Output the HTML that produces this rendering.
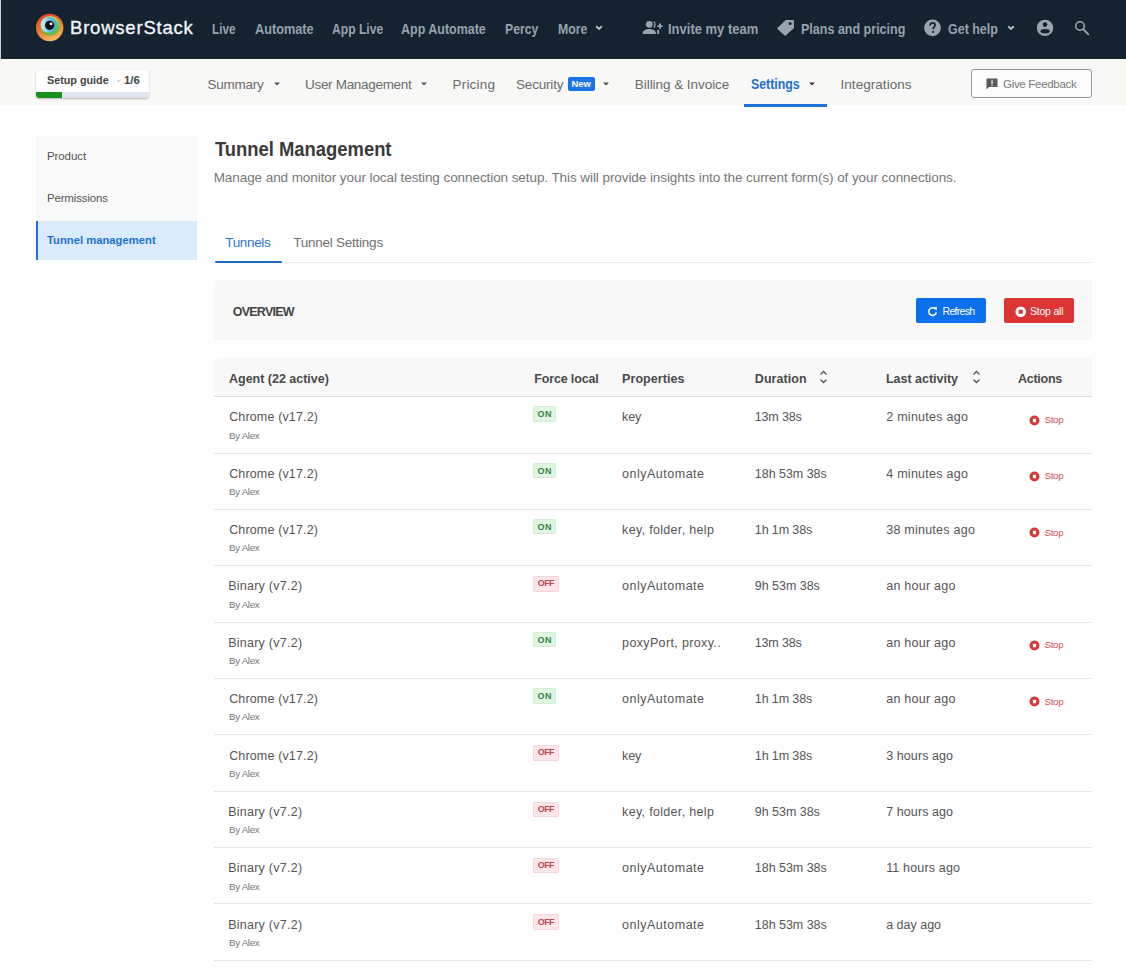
<!DOCTYPE html>
<html><head><meta charset="utf-8"><title>Tunnel Management</title>
<style>
html,body{margin:0;padding:0;}
body{width:1126px;height:978px;position:relative;overflow:hidden;background:#fff;font-family:"Liberation Sans",sans-serif;}
.t{position:absolute;white-space:nowrap;}
.abs{position:absolute;}
#topbar{position:absolute;left:1px;top:0;width:1125px;height:59px;background:#152331;}
#leftedge{position:absolute;left:0;top:0;width:1px;height:59px;background:#c9d1dc;}
#subnav{position:absolute;left:0;top:59px;width:1126px;height:45.5px;background:#f8f8f7;}
#setup{position:absolute;left:36px;top:70px;width:112.5px;height:27.5px;background:#fff;border-radius:3px;box-shadow:0 1px 2px rgba(0,0,0,0.25);overflow:hidden;}
#setup .bar{position:absolute;left:0;bottom:0;width:100%;height:5.8px;background:#dfe4ef;}
#setup .prog{position:absolute;left:0;bottom:0;width:26px;height:5.8px;background:#17901f;}
#newbadge{position:absolute;left:567.6px;top:76.6px;width:27.4px;height:14px;background:#1773e6;border-radius:2px;}
#setting-ul{position:absolute;left:743.8px;top:104px;width:83.4px;height:2.5px;background:#1f73d8;}
#feedback{position:absolute;left:971px;top:69.3px;width:119px;height:26.6px;border:1px solid #969696;border-radius:3px;background:#fcfcfc;}
#sidebar{position:absolute;left:35.5px;top:135.6px;width:161px;height:124.4px;background:#f9f9f9;}
#side-active{position:absolute;left:35.5px;top:220.8px;width:161px;height:39.2px;background:#daecfb;}
#side-bar{position:absolute;left:35.5px;top:220.8px;width:2px;height:39.2px;background:#1f73d8;}
#tabline{position:absolute;left:214.7px;top:262px;width:877.3px;height:1px;background:#ebebeb;}
#tab-ul{position:absolute;left:214.7px;top:261.2px;width:67.4px;height:2.2px;background:#1e68c2;border-radius:1px;}
#overview{position:absolute;left:214.3px;top:280.2px;width:877.4px;height:60.1px;background:#f8f8f8;border-radius:3px;}
#btn-refresh{position:absolute;left:915.9px;top:298.3px;width:70.3px;height:24.5px;background:#0c6fec;border-radius:2px;}
#btn-stop{position:absolute;left:1004.1px;top:298.3px;width:70px;height:24.5px;background:#db3434;border-radius:2px;}
#thead{position:absolute;left:214.3px;top:358.3px;width:877.7px;height:38.1px;background:#f8f8f8;border-radius:4px 4px 0 0;}
#thead-line{position:absolute;left:214.3px;top:396.3px;width:877.7px;height:1px;background:#dcdcdc;}
.rowline{position:absolute;left:214.3px;width:877.7px;height:1px;background:#e6e6e6;}
.badge{position:absolute;left:533.3px;height:15.4px;border-radius:2px;}
.badge.on{width:22.6px;background:#e0f6e0;box-shadow:inset 0 0 0 1px #d2efd4;}
.badge.off{width:26.2px;background:#fde6ea;box-shadow:inset 0 0 0 1px #f9d6dc;}
.stopic{position:absolute;left:1029px;}
</style></head><body>
<div id="topbar"></div><div id="leftedge"></div>
<svg class="abs" style="left:0;top:0" width="70" height="59" viewBox="0 0 70 59">
  <defs>
    <linearGradient id="lgO" x1="0.3" y1="0" x2="0.7" y2="1">
      <stop offset="0" stop-color="#e4402e"/><stop offset="0.45" stop-color="#ec7430"/><stop offset="1" stop-color="#f4c15e"/>
    </linearGradient>
    <linearGradient id="lgG" x1="0.5" y1="0" x2="0.5" y2="1">
      <stop offset="0" stop-color="#c9d84a"/><stop offset="0.5" stop-color="#77c043"/><stop offset="1" stop-color="#5fb844"/>
    </linearGradient>
    <linearGradient id="lgB" x1="0" y1="0.5" x2="1" y2="0.5">
      <stop offset="0" stop-color="#d9eef4"/><stop offset="0.5" stop-color="#6cc5e0"/><stop offset="1" stop-color="#3aa9d2"/>
    </linearGradient>
  </defs>
  <circle cx="49.7" cy="27.5" r="13.7" fill="url(#lgO)"/>
  <circle cx="50.2" cy="25.8" r="9.9" fill="url(#lgG)"/>
  <circle cx="48.9" cy="24.8" r="8.0" fill="url(#lgB)"/>
  <circle cx="49.6" cy="25.3" r="4.6" fill="#0e1218"/>
  <circle cx="51" cy="23.8" r="1.4" fill="#fff"/>
</svg>
<!-- top nav icons -->
<svg class="abs" style="left:594px;top:24px" width="10" height="8" viewBox="0 0 10 8"><path d="M2.2 2.2 L5 4.9 L7.8 2.2" fill="none" stroke="#b4bcc6" stroke-width="1.9"/></svg>
<svg class="abs" style="left:641px;top:19px" width="23" height="18" viewBox="0 0 23 18">
  <circle cx="8.3" cy="5.3" r="3.4" fill="#9aa4af"/>
  <path d="M1.6 15 C1.6 11.3 4.6 9.9 8.3 9.9 C12 9.9 15 11.3 15 15 Z" fill="#9aa4af"/>
  <path d="M12.7 2.4 C14.5 3.8 14.5 7.2 12.7 8.5" fill="none" stroke="#9aa4af" stroke-width="1.3"/>
  <path d="M16.4 7.1 h5.2 M19 4.5 v5.2" stroke="#9aa4af" stroke-width="1.9"/>
  <rect x="16.2" y="11" width="2" height="4" fill="#9aa4af"/>
</svg>
<svg class="abs" style="left:776px;top:19px" width="19" height="19" viewBox="0 0 19 19">
  <path d="M9.8 1 L17.8 1.1 L18 9.0 L9.2 17.0 L0.9 9.6 Z" fill="#9aa4af"/>
  <circle cx="14.1" cy="4.4" r="1.5" fill="#152331"/>
</svg>
<svg class="abs" style="left:923px;top:19px" width="19" height="19" viewBox="0 0 19 19">
  <circle cx="9.5" cy="8.9" r="8.3" fill="#9aa4af"/>
  <path d="M7.1 6.4 C7.1 4.6 8.3 3.9 9.6 3.9 C11 3.9 12.1 4.8 12.1 6.1 C12.1 7.8 10.1 8.1 10.1 10.3" fill="none" stroke="#152331" stroke-width="1.7"/>
  <circle cx="10.1" cy="13.0" r="1.1" fill="#152331"/>
</svg>
<svg class="abs" style="left:1006px;top:24px" width="10" height="8" viewBox="0 0 10 8"><path d="M2.2 2.2 L5 4.9 L7.8 2.2" fill="none" stroke="#b4bcc6" stroke-width="1.9"/></svg>
<svg class="abs" style="left:1036px;top:19px" width="18" height="19" viewBox="0 0 18 19">
  <circle cx="9" cy="8.9" r="8.2" fill="#9aa4af"/>
  <circle cx="9" cy="5.6" r="2.3" fill="#152331"/>
  <ellipse cx="9.1" cy="12.3" rx="4.6" ry="2.2" fill="#152331"/>
</svg>
<svg class="abs" style="left:1072px;top:19px" width="18" height="18" viewBox="0 0 18 18">
  <circle cx="8" cy="7" r="4.3" fill="none" stroke="#9aa4af" stroke-width="1.6"/>
  <path d="M11.2 10.2 L16.3 15.3" stroke="#9aa4af" stroke-width="1.9" stroke-linecap="round"/>
</svg>
<div id="subnav"></div>
<div id="setup"><div class="bar"></div><div class="prog"></div></div>
<svg class="abs" style="left:116px;top:79px" width="5" height="5" viewBox="0 0 5 5"><path d="M0.5 1 L4.5 1 L2.5 3.5 Z" fill="#d0d0d0"/></svg>
<div id="newbadge"></div>
<div id="setting-ul"></div>
<div id="feedback"></div>
<!-- carets -->
<svg class="abs" style="left:272px;top:81px" width="10" height="6" viewBox="0 0 10 6"><path d="M2 1.5 L8 1.5 L5 4.5 Z" fill="#555"/></svg>
<svg class="abs" style="left:419px;top:81px" width="10" height="6" viewBox="0 0 10 6"><path d="M2 1.5 L8 1.5 L5 4.5 Z" fill="#555"/></svg>
<svg class="abs" style="left:601px;top:81px" width="10" height="6" viewBox="0 0 10 6"><path d="M2 1.5 L8 1.5 L5 4.5 Z" fill="#555"/></svg>
<svg class="abs" style="left:807px;top:81px" width="10" height="6" viewBox="0 0 10 6"><path d="M2 1.5 L8 1.5 L5 4.5 Z" fill="#3a3a3a"/></svg>
<svg class="abs" style="left:985px;top:77px" width="14" height="14" viewBox="0 0 14 14">
  <path d="M1.5 1.5 H12.5 V10 H4 L1.5 12.5 Z" fill="#595959"/>
  <rect x="6.4" y="3.3" width="1.3" height="3.6" fill="#fafafa"/><rect x="6.4" y="7.7" width="1.3" height="1.2" fill="#fafafa"/>
</svg>
<div id="sidebar"></div><div id="side-active"></div><div id="side-bar"></div>
<div id="tabline"></div><div id="tab-ul"></div>
<div id="overview"></div>
<div id="btn-refresh"></div><div id="btn-stop"></div>
<svg class="abs" style="left:927px;top:306px" width="11" height="11" viewBox="0 0 11 11">
  <path d="M8.7 3.4 A3.8 3.8 0 1 0 9.3 6.3" fill="none" stroke="#fff" stroke-width="1.5"/>
  <path d="M6.6 1.2 L9.9 1.0 L9.7 4.4 Z" fill="#fff"/>
</svg>
<svg class="abs" style="left:1014.5px;top:305.6px" width="11.5" height="11.5" viewBox="0 0 11.5 11.5"><circle cx="5.75" cy="5.75" r="5.3" fill="#fff"/><rect x="3.75" y="3.75" width="4" height="4" fill="#db3434"/></svg>
<div id="thead"></div><div id="thead-line"></div>
<svg class="abs" style="left:818px;top:369px" width="11" height="16" viewBox="0 0 11 16"><path d="M2.5 5.5 L5.5 2.5 L8.5 5.5 M2.5 10.5 L5.5 13.5 L8.5 10.5" fill="none" stroke="#555" stroke-width="1.3"/></svg>
<svg class="abs" style="left:970.5px;top:369px" width="11" height="16" viewBox="0 0 11 16"><path d="M2.5 5.5 L5.5 2.5 L8.5 5.5 M2.5 10.5 L5.5 13.5 L8.5 10.5" fill="none" stroke="#555" stroke-width="1.3"/></svg>
<div class="rowline" style="top:452.65px"></div>
<div class="rowline" style="top:509.00px"></div>
<div class="rowline" style="top:565.35px"></div>
<div class="rowline" style="top:621.70px"></div>
<div class="rowline" style="top:678.05px"></div>
<div class="rowline" style="top:734.40px"></div>
<div class="rowline" style="top:790.75px"></div>
<div class="rowline" style="top:847.10px"></div>
<div class="rowline" style="top:903.45px"></div>
<div class="rowline" style="top:959.80px"></div>
<div class="badge on" style="top:406.40px"></div>
<div class="badge on" style="top:462.75px"></div>
<div class="badge on" style="top:519.10px"></div>
<div class="badge off" style="top:576.15px"></div>
<div class="badge on" style="top:631.80px"></div>
<div class="badge on" style="top:688.15px"></div>
<div class="badge off" style="top:745.20px"></div>
<div class="badge off" style="top:801.55px"></div>
<div class="badge off" style="top:857.90px"></div>
<div class="badge off" style="top:914.25px"></div>
<svg class="stopic" style="top:414.70px" width="11" height="11" viewBox="0 0 11 11"><circle cx="5.5" cy="5.5" r="5" fill="#d23a3a"/><rect x="3.9" y="3.8" width="3.2" height="3.4" fill="#fff"/></svg>
<svg class="stopic" style="top:471.05px" width="11" height="11" viewBox="0 0 11 11"><circle cx="5.5" cy="5.5" r="5" fill="#d23a3a"/><rect x="3.9" y="3.8" width="3.2" height="3.4" fill="#fff"/></svg>
<svg class="stopic" style="top:527.40px" width="11" height="11" viewBox="0 0 11 11"><circle cx="5.5" cy="5.5" r="5" fill="#d23a3a"/><rect x="3.9" y="3.8" width="3.2" height="3.4" fill="#fff"/></svg>
<svg class="stopic" style="top:640.10px" width="11" height="11" viewBox="0 0 11 11"><circle cx="5.5" cy="5.5" r="5" fill="#d23a3a"/><rect x="3.9" y="3.8" width="3.2" height="3.4" fill="#fff"/></svg>
<svg class="stopic" style="top:696.45px" width="11" height="11" viewBox="0 0 11 11"><circle cx="5.5" cy="5.5" r="5" fill="#d23a3a"/><rect x="3.9" y="3.8" width="3.2" height="3.4" fill="#fff"/></svg>

<div class="t" style="left:70.00px;top:19.14px;font-size:18.5px;line-height:18.5px;font-weight:normal;color:#f2f4f7;letter-spacing:0.794px;-webkit-text-stroke:0.35px #f2f4f7;">BrowserStack</div>
<div class="t" style="left:212.00px;top:21.80px;font-size:14.3px;line-height:14.3px;font-weight:bold;color:#97a1ac;transform:scaleX(0.8201);transform-origin:0 0;">Live</div>
<div class="t" style="left:254.70px;top:21.80px;font-size:14.3px;line-height:14.3px;font-weight:bold;color:#97a1ac;transform:scaleX(0.8882);transform-origin:0 0;">Automate</div>
<div class="t" style="left:331.80px;top:21.80px;font-size:14.3px;line-height:14.3px;font-weight:bold;color:#97a1ac;transform:scaleX(0.8474);transform-origin:0 0;">App Live</div>
<div class="t" style="left:401.30px;top:21.80px;font-size:14.3px;line-height:14.3px;font-weight:bold;color:#97a1ac;transform:scaleX(0.8727);transform-origin:0 0;">App Automate</div>
<div class="t" style="left:505.40px;top:21.80px;font-size:14.3px;line-height:14.3px;font-weight:bold;color:#97a1ac;transform:scaleX(0.8564);transform-origin:0 0;">Percy</div>
<div class="t" style="left:557.60px;top:21.80px;font-size:14.3px;line-height:14.3px;font-weight:bold;color:#97a1ac;transform:scaleX(0.8595);transform-origin:0 0;">More</div>
<div class="t" style="left:667.70px;top:21.80px;font-size:14.3px;line-height:14.3px;font-weight:bold;color:#97a1ac;transform:scaleX(0.9086);transform-origin:0 0;">Invite my team</div>
<div class="t" style="left:800.60px;top:21.80px;font-size:14.3px;line-height:14.3px;font-weight:bold;color:#97a1ac;transform:scaleX(0.8756);transform-origin:0 0;">Plans and pricing</div>
<div class="t" style="left:947.70px;top:21.80px;font-size:14.3px;line-height:14.3px;font-weight:bold;color:#97a1ac;transform:scaleX(0.8719);transform-origin:0 0;">Get help</div>
<div class="t" style="left:207.40px;top:77.97px;font-size:13.5px;line-height:13.5px;font-weight:normal;color:#6b6b6b;letter-spacing:-0.235px;">Summary</div>
<div class="t" style="left:305.00px;top:77.97px;font-size:13.5px;line-height:13.5px;font-weight:normal;color:#6b6b6b;letter-spacing:-0.307px;">User Management</div>
<div class="t" style="left:452.50px;top:77.97px;font-size:13.5px;line-height:13.5px;font-weight:normal;color:#6b6b6b;letter-spacing:0.191px;">Pricing</div>
<div class="t" style="left:516.00px;top:77.97px;font-size:13.5px;line-height:13.5px;font-weight:normal;color:#6b6b6b;letter-spacing:-0.188px;">Security</div>
<div class="t" style="left:634.80px;top:77.97px;font-size:13.5px;line-height:13.5px;font-weight:normal;color:#6b6b6b;letter-spacing:-0.049px;">Billing &amp; Invoice</div>
<div class="t" style="left:840.50px;top:77.97px;font-size:13.5px;line-height:13.5px;font-weight:normal;color:#6b6b6b;letter-spacing:0.046px;">Integrations</div>
<div class="t" style="left:750.90px;top:77.72px;font-size:13.8px;line-height:13.8px;font-weight:bold;color:#1f6fd1;transform:scaleX(0.8949);transform-origin:0 0;">Settings</div>
<div class="t" style="left:1003.00px;top:79.27px;font-size:11.5px;line-height:11.5px;font-weight:normal;color:#7a7a7a;letter-spacing:-0.300px;">Give Feedback</div>
<div class="t" style="left:46.90px;top:74.71px;font-size:11.8px;line-height:11.8px;font-weight:bold;color:#444;transform:scaleX(0.9140);transform-origin:0 0;">Setup guide</div>
<div class="t" style="left:124.00px;top:74.71px;font-size:11.8px;line-height:11.8px;font-weight:bold;color:#444;transform:scaleX(0.9680);transform-origin:0 0;">1/6</div>
<div class="t" style="left:571.60px;top:79.46px;font-size:9.5px;line-height:9.5px;font-weight:bold;color:#ffffff;letter-spacing:-0.172px;">New</div>
<div class="t" style="left:46.90px;top:150.67px;font-size:11.5px;line-height:11.5px;font-weight:normal;color:#555;letter-spacing:-0.056px;">Product</div>
<div class="t" style="left:46.90px;top:192.67px;font-size:11.5px;line-height:11.5px;font-weight:normal;color:#555;letter-spacing:-0.148px;">Permissions</div>
<div class="t" style="left:46.90px;top:235.01px;font-size:11.8px;line-height:11.8px;font-weight:bold;color:#1f6fd1;transform:scaleX(0.9543);transform-origin:0 0;">Tunnel management</div>
<div class="t" style="left:215.00px;top:139.47px;font-size:20px;line-height:20px;font-weight:bold;color:#3a3a3a;transform:scaleX(0.9199);transform-origin:0 0;">Tunnel Management</div>
<div class="t" style="left:213.70px;top:170.77px;font-size:13.5px;line-height:13.5px;font-weight:normal;color:#767676;letter-spacing:-0.075px;">Manage and monitor your local testing connection setup. This will provide insights into the current form(s) of your connections.</div>
<div class="t" style="left:225.30px;top:235.97px;font-size:13.5px;line-height:13.5px;font-weight:normal;color:#2a74cf;letter-spacing:-0.346px;">Tunnels</div>
<div class="t" style="left:293.20px;top:235.97px;font-size:13.5px;line-height:13.5px;font-weight:normal;color:#707070;letter-spacing:-0.240px;">Tunnel Settings</div>
<div class="t" style="left:232.70px;top:305.62px;font-size:12.5px;line-height:12.5px;font-weight:bold;color:#444;letter-spacing:-0.750px;">OVERVIEW</div>
<div class="t" style="left:942.60px;top:305.61px;font-size:10.5px;line-height:10.5px;font-weight:normal;color:#ffffff;letter-spacing:-0.704px;">Refresh</div>
<div class="t" style="left:1030.00px;top:305.61px;font-size:10.5px;line-height:10.5px;font-weight:normal;color:#ffffff;letter-spacing:-0.213px;">Stop all</div>
<div class="t" style="left:229.00px;top:373.12px;font-size:12.5px;line-height:12.5px;font-weight:bold;color:#4a4a4a;letter-spacing:-0.010px;">Agent (22 active)</div>
<div class="t" style="left:534.20px;top:373.12px;font-size:12.5px;line-height:12.5px;font-weight:bold;color:#4a4a4a;letter-spacing:-0.142px;">Force local</div>
<div class="t" style="left:622.10px;top:373.12px;font-size:12.5px;line-height:12.5px;font-weight:bold;color:#4a4a4a;letter-spacing:0.058px;">Properties</div>
<div class="t" style="left:754.80px;top:373.12px;font-size:12.5px;line-height:12.5px;font-weight:bold;color:#4a4a4a;letter-spacing:0.064px;">Duration</div>
<div class="t" style="left:886.00px;top:373.12px;font-size:12.5px;line-height:12.5px;font-weight:bold;color:#4a4a4a;letter-spacing:-0.017px;">Last activity</div>
<div class="t" style="left:1018.00px;top:373.12px;font-size:12.5px;line-height:12.5px;font-weight:bold;color:#4a4a4a;letter-spacing:-0.264px;">Actions</div>
<div class="t" style="left:229.20px;top:411.42px;font-size:12.5px;line-height:12.5px;font-weight:normal;color:#555;letter-spacing:0.148px;">Chrome (v17.2)</div>
<div class="t" style="left:229.00px;top:430.70px;font-size:9.8px;line-height:9.8px;font-weight:normal;color:#777;letter-spacing:-0.319px;">By Alex</div>
<div class="t" style="left:622.10px;top:411.42px;font-size:12.5px;line-height:12.5px;font-weight:normal;color:#555;letter-spacing:-0.201px;">key</div>
<div class="t" style="left:754.80px;top:411.42px;font-size:12.5px;line-height:12.5px;font-weight:normal;color:#555;letter-spacing:-0.166px;">13m 38s</div>
<div class="t" style="left:886.20px;top:411.42px;font-size:12.5px;line-height:12.5px;font-weight:normal;color:#555;letter-spacing:0.269px;">2 minutes ago</div>
<div class="t" style="left:537.50px;top:410.18px;font-size:9.0px;line-height:9.0px;font-weight:bold;color:#358446;letter-spacing:0.600px;">ON</div>
<div class="t" style="left:1044.50px;top:414.80px;font-size:9.8px;line-height:9.8px;font-weight:normal;color:#d64f5e;letter-spacing:-0.335px;">Stop</div>
<div class="t" style="left:229.20px;top:467.77px;font-size:12.5px;line-height:12.5px;font-weight:normal;color:#555;letter-spacing:0.148px;">Chrome (v17.2)</div>
<div class="t" style="left:229.00px;top:487.05px;font-size:9.8px;line-height:9.8px;font-weight:normal;color:#777;letter-spacing:-0.319px;">By Alex</div>
<div class="t" style="left:622.10px;top:467.77px;font-size:12.5px;line-height:12.5px;font-weight:normal;color:#555;letter-spacing:0.502px;">onlyAutomate</div>
<div class="t" style="left:754.80px;top:467.77px;font-size:12.5px;line-height:12.5px;font-weight:normal;color:#555;letter-spacing:-0.032px;">18h 53m 38s</div>
<div class="t" style="left:886.20px;top:467.77px;font-size:12.5px;line-height:12.5px;font-weight:normal;color:#555;letter-spacing:0.269px;">4 minutes ago</div>
<div class="t" style="left:537.50px;top:466.53px;font-size:9.0px;line-height:9.0px;font-weight:bold;color:#358446;letter-spacing:0.600px;">ON</div>
<div class="t" style="left:1044.50px;top:471.15px;font-size:9.8px;line-height:9.8px;font-weight:normal;color:#d64f5e;letter-spacing:-0.335px;">Stop</div>
<div class="t" style="left:229.20px;top:524.12px;font-size:12.5px;line-height:12.5px;font-weight:normal;color:#555;letter-spacing:0.148px;">Chrome (v17.2)</div>
<div class="t" style="left:229.00px;top:543.40px;font-size:9.8px;line-height:9.8px;font-weight:normal;color:#777;letter-spacing:-0.319px;">By Alex</div>
<div class="t" style="left:622.10px;top:524.12px;font-size:12.5px;line-height:12.5px;font-weight:normal;color:#555;letter-spacing:0.320px;">key, folder, help</div>
<div class="t" style="left:754.80px;top:524.12px;font-size:12.5px;line-height:12.5px;font-weight:normal;color:#555;letter-spacing:-0.115px;">1h 1m 38s</div>
<div class="t" style="left:886.20px;top:524.12px;font-size:12.5px;line-height:12.5px;font-weight:normal;color:#555;letter-spacing:0.244px;">38 minutes ago</div>
<div class="t" style="left:537.50px;top:522.88px;font-size:9.0px;line-height:9.0px;font-weight:bold;color:#358446;letter-spacing:0.600px;">ON</div>
<div class="t" style="left:1044.50px;top:527.50px;font-size:9.8px;line-height:9.8px;font-weight:normal;color:#d64f5e;letter-spacing:-0.335px;">Stop</div>
<div class="t" style="left:228.20px;top:580.47px;font-size:12.5px;line-height:12.5px;font-weight:normal;color:#555;letter-spacing:0.251px;">Binary (v7.2)</div>
<div class="t" style="left:229.00px;top:599.75px;font-size:9.8px;line-height:9.8px;font-weight:normal;color:#777;letter-spacing:-0.319px;">By Alex</div>
<div class="t" style="left:622.10px;top:580.47px;font-size:12.5px;line-height:12.5px;font-weight:normal;color:#555;letter-spacing:0.502px;">onlyAutomate</div>
<div class="t" style="left:754.80px;top:580.47px;font-size:12.5px;line-height:12.5px;font-weight:normal;color:#555;letter-spacing:-0.030px;">9h 53m 38s</div>
<div class="t" style="left:886.20px;top:580.47px;font-size:12.5px;line-height:12.5px;font-weight:normal;color:#555;letter-spacing:0.253px;">an hour ago</div>
<div class="t" style="left:537.80px;top:579.43px;font-size:9.0px;line-height:9.0px;font-weight:bold;color:#bf4757;letter-spacing:-0.599px;">OFF</div>
<div class="t" style="left:228.20px;top:636.82px;font-size:12.5px;line-height:12.5px;font-weight:normal;color:#555;letter-spacing:0.251px;">Binary (v7.2)</div>
<div class="t" style="left:229.00px;top:656.10px;font-size:9.8px;line-height:9.8px;font-weight:normal;color:#777;letter-spacing:-0.319px;">By Alex</div>
<div class="t" style="left:622.10px;top:636.82px;font-size:12.5px;line-height:12.5px;font-weight:normal;color:#555;letter-spacing:0.357px;">poxyPort, proxy..</div>
<div class="t" style="left:754.80px;top:636.82px;font-size:12.5px;line-height:12.5px;font-weight:normal;color:#555;letter-spacing:-0.166px;">13m 38s</div>
<div class="t" style="left:886.20px;top:636.82px;font-size:12.5px;line-height:12.5px;font-weight:normal;color:#555;letter-spacing:0.253px;">an hour ago</div>
<div class="t" style="left:537.50px;top:635.58px;font-size:9.0px;line-height:9.0px;font-weight:bold;color:#358446;letter-spacing:0.600px;">ON</div>
<div class="t" style="left:1044.50px;top:640.20px;font-size:9.8px;line-height:9.8px;font-weight:normal;color:#d64f5e;letter-spacing:-0.335px;">Stop</div>
<div class="t" style="left:229.20px;top:693.17px;font-size:12.5px;line-height:12.5px;font-weight:normal;color:#555;letter-spacing:0.148px;">Chrome (v17.2)</div>
<div class="t" style="left:229.00px;top:712.45px;font-size:9.8px;line-height:9.8px;font-weight:normal;color:#777;letter-spacing:-0.319px;">By Alex</div>
<div class="t" style="left:622.10px;top:693.17px;font-size:12.5px;line-height:12.5px;font-weight:normal;color:#555;letter-spacing:0.502px;">onlyAutomate</div>
<div class="t" style="left:754.80px;top:693.17px;font-size:12.5px;line-height:12.5px;font-weight:normal;color:#555;letter-spacing:-0.115px;">1h 1m 38s</div>
<div class="t" style="left:886.20px;top:693.17px;font-size:12.5px;line-height:12.5px;font-weight:normal;color:#555;letter-spacing:0.253px;">an hour ago</div>
<div class="t" style="left:537.50px;top:691.93px;font-size:9.0px;line-height:9.0px;font-weight:bold;color:#358446;letter-spacing:0.600px;">ON</div>
<div class="t" style="left:1044.50px;top:696.55px;font-size:9.8px;line-height:9.8px;font-weight:normal;color:#d64f5e;letter-spacing:-0.335px;">Stop</div>
<div class="t" style="left:229.20px;top:749.52px;font-size:12.5px;line-height:12.5px;font-weight:normal;color:#555;letter-spacing:0.148px;">Chrome (v17.2)</div>
<div class="t" style="left:229.00px;top:768.80px;font-size:9.8px;line-height:9.8px;font-weight:normal;color:#777;letter-spacing:-0.319px;">By Alex</div>
<div class="t" style="left:622.10px;top:749.52px;font-size:12.5px;line-height:12.5px;font-weight:normal;color:#555;letter-spacing:-0.201px;">key</div>
<div class="t" style="left:754.80px;top:749.52px;font-size:12.5px;line-height:12.5px;font-weight:normal;color:#555;letter-spacing:-0.115px;">1h 1m 38s</div>
<div class="t" style="left:886.20px;top:749.52px;font-size:12.5px;line-height:12.5px;font-weight:normal;color:#555;letter-spacing:0.083px;">3 hours ago</div>
<div class="t" style="left:537.80px;top:748.48px;font-size:9.0px;line-height:9.0px;font-weight:bold;color:#bf4757;letter-spacing:-0.599px;">OFF</div>
<div class="t" style="left:228.20px;top:805.87px;font-size:12.5px;line-height:12.5px;font-weight:normal;color:#555;letter-spacing:0.251px;">Binary (v7.2)</div>
<div class="t" style="left:229.00px;top:825.15px;font-size:9.8px;line-height:9.8px;font-weight:normal;color:#777;letter-spacing:-0.319px;">By Alex</div>
<div class="t" style="left:622.10px;top:805.87px;font-size:12.5px;line-height:12.5px;font-weight:normal;color:#555;letter-spacing:0.320px;">key, folder, help</div>
<div class="t" style="left:754.80px;top:805.87px;font-size:12.5px;line-height:12.5px;font-weight:normal;color:#555;letter-spacing:-0.030px;">9h 53m 38s</div>
<div class="t" style="left:886.20px;top:805.87px;font-size:12.5px;line-height:12.5px;font-weight:normal;color:#555;letter-spacing:0.083px;">7 hours ago</div>
<div class="t" style="left:537.80px;top:804.83px;font-size:9.0px;line-height:9.0px;font-weight:bold;color:#bf4757;letter-spacing:-0.599px;">OFF</div>
<div class="t" style="left:228.20px;top:862.22px;font-size:12.5px;line-height:12.5px;font-weight:normal;color:#555;letter-spacing:0.251px;">Binary (v7.2)</div>
<div class="t" style="left:229.00px;top:881.50px;font-size:9.8px;line-height:9.8px;font-weight:normal;color:#777;letter-spacing:-0.319px;">By Alex</div>
<div class="t" style="left:622.10px;top:862.22px;font-size:12.5px;line-height:12.5px;font-weight:normal;color:#555;letter-spacing:0.502px;">onlyAutomate</div>
<div class="t" style="left:754.80px;top:862.22px;font-size:12.5px;line-height:12.5px;font-weight:normal;color:#555;letter-spacing:-0.032px;">18h 53m 38s</div>
<div class="t" style="left:886.20px;top:862.22px;font-size:12.5px;line-height:12.5px;font-weight:normal;color:#555;letter-spacing:0.155px;">11 hours ago</div>
<div class="t" style="left:537.80px;top:861.18px;font-size:9.0px;line-height:9.0px;font-weight:bold;color:#bf4757;letter-spacing:-0.599px;">OFF</div>
<div class="t" style="left:228.20px;top:918.57px;font-size:12.5px;line-height:12.5px;font-weight:normal;color:#555;letter-spacing:0.251px;">Binary (v7.2)</div>
<div class="t" style="left:229.00px;top:937.85px;font-size:9.8px;line-height:9.8px;font-weight:normal;color:#777;letter-spacing:-0.319px;">By Alex</div>
<div class="t" style="left:622.10px;top:918.57px;font-size:12.5px;line-height:12.5px;font-weight:normal;color:#555;letter-spacing:0.502px;">onlyAutomate</div>
<div class="t" style="left:754.80px;top:918.57px;font-size:12.5px;line-height:12.5px;font-weight:normal;color:#555;letter-spacing:-0.032px;">18h 53m 38s</div>
<div class="t" style="left:886.20px;top:918.57px;font-size:12.5px;line-height:12.5px;font-weight:normal;color:#555;letter-spacing:-0.007px;">a day ago</div>
<div class="t" style="left:537.80px;top:917.53px;font-size:9.0px;line-height:9.0px;font-weight:bold;color:#bf4757;letter-spacing:-0.599px;">OFF</div>
</body></html>
